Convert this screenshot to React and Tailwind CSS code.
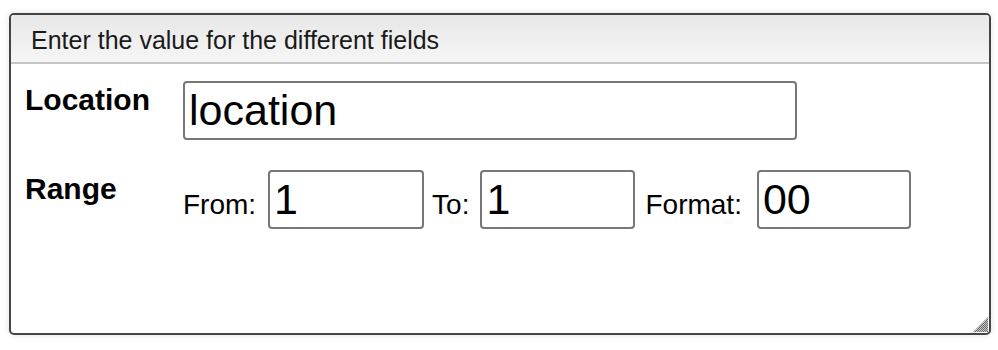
import React from 'react';

// Dialog-ish form panel with a titled header and a resize grip
function Grip() {
  return (
    <svg width="16" height="16" viewBox="0 0 16 16" className="absolute right-[1px] bottom-[1px]">
      <defs>
        <pattern id="chk" width="2" height="2" patternUnits="userSpaceOnUse">
          <rect width="2" height="2" fill="#c8c8c8" />
          <rect width="1" height="1" fill="#6a6a6a" />
          <rect x="1" y="1" width="1" height="1" fill="#6a6a6a" />
        </pattern>
      </defs>
      <polygon points="16,1 16,16 1,16" fill="url(#chk)" />
    </svg>
  );
}

const inputCls =
  'h-[59px] border-2 border-[#777] rounded-[4px] px-[4px] text-[43px] leading-[49px] text-black bg-white outline-none';

export default function App() {
  return (
    <div className="min-h-screen bg-white pt-[13px] pl-[9px] font-['Liberation_Sans',Arial,sans-serif] text-black">
      <div className="relative w-[982px] h-[322px] border-2 border-[#444] rounded-[5px] overflow-hidden bg-white shadow-[0_0_6px_rgba(0,0,0,0.12)]">
        {/* Header */}
        <div className="h-[49px] border-b-2 border-[#c6c6c6] bg-gradient-to-b from-[#e7e7e7] to-[#f6f6f6] pl-[20px] pt-[11px] text-[25px] leading-[28px] text-[#1a1a1a]">
          Enter the value for the different fields
        </div>

        {/* Fields */}
        <div className="pt-[17px] pl-[14px] flex flex-col gap-[30px]">
          <div className="flex items-start">
            <div className="w-[158px] mt-[3px] font-bold text-[30px] leading-[32px]">Location</div>
            <input className={`${inputCls} w-[614px]`} defaultValue="location" />
          </div>

          <div className="flex items-start">
            <div className="w-[158px] mt-[3px] font-bold text-[30px] leading-[32px]">Range</div>
            <div className="flex items-baseline text-[28px]">
              <span>From:</span>
              <input className={`${inputCls} w-[156px] ml-[12px]`} defaultValue="1" />
              <span className="ml-[8px]">To:</span>
              <input className={`${inputCls} w-[155px] ml-[11px]`} defaultValue="1" />
              <span className="ml-[10px]">Format:</span>
              <input className={`${inputCls} w-[154px] ml-[15px]`} defaultValue="00" />
            </div>
          </div>
        </div>

        <Grip />
      </div>
    </div>
  );
}
